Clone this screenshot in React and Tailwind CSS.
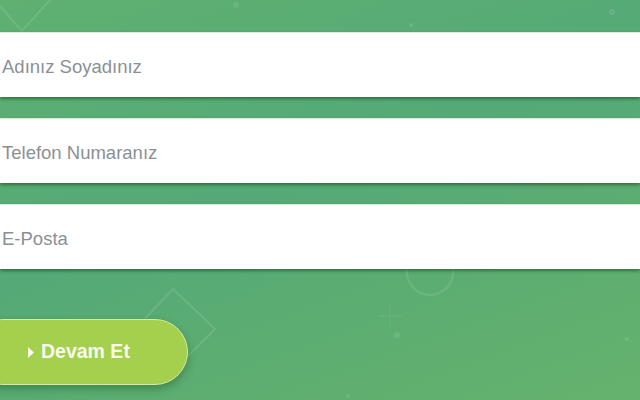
import { useState } from 'react'

// Arka plan süsleri (soluk çizgiler)
function Decor() {
  return (
    <svg className="absolute inset-0 h-full w-full" viewBox="0 0 640 400" fill="none">
      <g stroke="rgba(255,255,255,0.11)" strokeWidth="2">
        <path d="M-2 4 L22 31 L50 0" />
        <path d="M173 289 L215 329 L175 369 L135 329 Z" />
        <circle cx="430" cy="272" r="23" />
        <path d="M390 305 V330 M378 316 H402" strokeWidth="1.5" stroke="rgba(255,255,255,0.06)" />
        <path d="M72 335 V358 M60 346 H84" strokeWidth="1.5" stroke="rgba(255,255,255,0.05)" />
      </g>
      <g fill="rgba(255,255,255,0.1)">
        <circle cx="236" cy="5" r="3" />
        <circle cx="411" cy="25" r="2" />
        <circle cx="397" cy="335" r="3" />
        <circle cx="612" cy="12" r="3" />
        <circle cx="627" cy="339" r="2" />
        <circle cx="348" cy="396" r="2" />
      </g>
    </svg>
  )
}

function Field({ placeholder, type = 'text' }) {
  const [value, setValue] = useState('')
  return (
    <div className="relative h-[65px] w-full border-t border-[#d9eed9] bg-white shadow-[0_2px_3px_rgba(0,40,0,0.45)]">
      <input
        type={type}
        value={value}
        onChange={(e) => setValue(e.target.value)}
        placeholder={placeholder}
        className="h-full w-full bg-transparent pl-[2px] pt-[3px] text-[18.5px] text-gray-700 outline-none placeholder:text-[#8b9095]"
        style={{ fontFamily: '"Liberation Sans", Arial, sans-serif' }}
      />
    </div>
  )
}

export default function App() {
  return (
    <div className="relative h-[400px] w-[640px] overflow-hidden bg-[linear-gradient(160deg,#5fb071_0%,#54a976_45%,#66b26d_100%)]">
      <Decor />
      <div className="relative flex flex-col gap-[21px] pt-[32px]">
        <Field placeholder="Adınız Soyadınız" />
        <Field placeholder="Telefon Numaranız" type="tel" />
        <Field placeholder="E-Posta" type="email" />
      </div>
      <div className="relative mt-[50px]">
        <button
          className="-ml-[30px] flex h-[66px] w-[218px] items-center gap-[7px] rounded-[33px] border border-[#d3eba3] bg-[#a4d04e] pl-[57px] text-[19.5px] font-bold text-[#f7fbea] shadow-[0_4px_8px_rgba(0,50,0,0.3)]"
          style={{ fontFamily: '"Liberation Sans", Arial, sans-serif' }}
        >
          <svg width="6" height="11" viewBox="0 0 6 11" className="mt-[1px]">
            <path d="M0 0 L6 5.5 L0 11 Z" fill="#f7fbea" />
          </svg>
          Devam Et
        </button>
      </div>
    </div>
  )
}
